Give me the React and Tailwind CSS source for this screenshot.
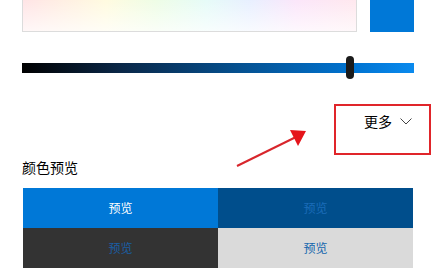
export default function App() {
  const cjk = { fontFamily: '"Noto Sans CJK SC", "Noto Sans", sans-serif' };
  return (
    <div className="relative w-[446px] h-[271px] bg-white overflow-hidden" style={cjk}>
      <div className="pl-[22px] w-[414px] flex flex-col">
        {/* picker top row */}
        <div className="flex h-[32px] gap-[13px]">
          <div className="flex-1 border-x border-b border-[#dcdcdc] bg-[linear-gradient(to_right,#ffe4e6,#fffbe0_25%,#eefde6_40%,#e6fbf8_55%,#e8f0ff_68%,#fbe6fa_82%,#ffe8ee)]">
            <div className="h-full w-full bg-[linear-gradient(to_bottom,rgba(255,255,255,0),rgba(255,255,255,0.7))]" />
          </div>
          <div className="w-[44px] bg-[#0078d7]" />
        </div>
        {/* slider */}
        <div className="relative mt-[24px] h-[23px] flex items-center">
          <div className="w-full h-[10px] bg-[linear-gradient(to_right,#000000,#0a2747_25%,#05508f_55%,#0074d2_85%,#0a8aee)]" />
          <div className="absolute left-[324px] top-0 w-[8px] h-[23px] rounded-full bg-[#1b1b1b]" />
        </div>
        {/* more row */}
        <div className="mt-[30px] h-[24px] flex items-center justify-end pr-[2px] gap-[8px]">
          <span className="text-[14px] leading-none text-black">更多</span>
          <svg width="12" height="7" viewBox="0 0 12 7">
            <path d="M0.5 0.5 L6 6 L11.5 0.5" fill="none" stroke="#444" strokeWidth="1" />
          </svg>
        </div>
        {/* title */}
        <div className="mt-[25px] text-[14px] leading-[18px] text-black">颜色预览</div>
        {/* preview grid */}
        <div className="mt-[12px] ml-[1px] w-[390px] grid grid-cols-2 text-[12px]">
          <div className="h-[40px] flex items-center justify-center bg-[#0078d7] text-white">预览</div>
          <div className="h-[40px] flex items-center justify-center bg-[#004e8c] text-[#1b6cb8]">预览</div>
          <div className="h-[40px] flex items-center justify-center bg-[#333333] text-[#1a5ea3]">预览</div>
          <div className="h-[40px] flex items-center justify-center bg-[#dadada] text-[#1466ad]">预览</div>
        </div>
      </div>
      {/* annotation: red box */}
      <div className="absolute left-[334px] top-[104px] w-[97px] h-[51px] border-2 border-[#e0252a]" />
      {/* annotation: arrow */}
      <svg className="absolute left-0 top-0" width="446" height="271" viewBox="0 0 446 271">
        <line x1="237" y1="166" x2="296" y2="137" stroke="#d8262c" strokeWidth="2" />
        <polygon points="306,131 290,130 298,146" fill="#e5141b" />
      </svg>
    </div>
  );
}
